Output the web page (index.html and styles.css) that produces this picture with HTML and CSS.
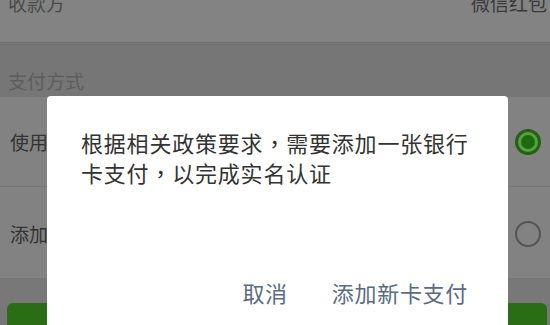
FILE: index.html
```html
<!DOCTYPE html>
<html lang="zh-CN">
<head>
<meta charset="utf-8">
<link rel="stylesheet" href="styles.css">
</head>
<body>
<div class="page">
  <div class="row-top">
    <span class="label">收款方</span>
    <span class="value">微信红包</span>
  </div>
  <div class="divider"></div>
  <div class="section-header">支付方式</div>
  <div class="option">
    <span class="label">使用零钱支付</span>
    <span class="radio checked"><span class="dot"></span></span>
  </div>
  <div class="option">
    <span class="label">添加新卡支付</span>
    <span class="radio"></span>
  </div>
  <div class="gap"></div>
  <div class="pay-btn"></div>

  <div class="dialog">
    <p class="message">根据相关政策要求<span class="comma" lang="zh-TW">，</span>需要添加一张银行卡支付<span class="comma" lang="zh-TW">，</span>以完成实名认证</p>
    <div class="actions">
      <span class="action">取消</span>
      <span class="action">添加新卡支付</span>
    </div>
  </div>
</div>
</body>
</html>
```

FILE: styles.css
```css
* { box-sizing: border-box; }
html, body {
  margin: 0;
  padding: 0;
  width: 550px;
  height: 325px;
  overflow: hidden;
  background: #777777;
  font-family: "Noto Sans CJK SC", "Noto Sans", sans-serif;
}
.page {
  position: relative;
  width: 550px;
  height: 325px;
  overflow: hidden;
}
.row-top {
  height: 42px;
  background: #838383;
  display: flex;
  justify-content: space-between;
  align-items: flex-start;
  padding: 0 3px 0 8px;
  font-size: 19px;
  color: #3a3a3a;
}
.row-top span {
  line-height: 20px;
  margin-top: -7px;
}
.row-top .label { color: #4a4a4a; }
.divider {
  height: 3px;
  border-top: 1px solid #6e6e6e;
  border-bottom: 1px solid #6e6e6e;
  background: #7a7a7a;
}
.section-header {
  height: 52px;
  background: #767676;
  padding: 24px 0 0 8px;
  font-size: 19px;
  line-height: 24px;
  color: #5d5d5d;
}
.option {
  height: 90px;
  background: #828282;
  display: flex;
  align-items: center;
  justify-content: space-between;
  padding: 0 9px 0 10px;
  font-size: 19px;
  color: #333;
  border-bottom: 1px solid #777;
}
.option + .option { height: 92px; padding-top: 2px; }
.radio {
  width: 26px;
  height: 26px;
  border-radius: 50%;
  border: 2px solid #545454;
  display: flex;
  align-items: center;
  justify-content: center;
}
.radio.checked {
  border: 3px solid #256016;
  background: #55a140;
}
.radio .dot {
  width: 14px;
  height: 14px;
  border-radius: 50%;
  background: #1d6a0c;
}
.gap {
  height: 24px;
  background: #787878;
}
.pay-btn {
  height: 40px;
  margin: 0 3px 0 7px;
  background: #2a6d14;
  border-radius: 6px;
}
.dialog {
  position: absolute;
  left: 47px;
  top: 96px;
  width: 461px;
  height: 260px;
  background: #ffffff;
  border-radius: 4px;
  padding: 31px 20px 0 34px;
}
.message {
  margin: 0;
  font-size: 22px;
  line-height: 30px;
  letter-spacing: 0.8px;
  color: #333333;
}
.comma {
  font-family: "Noto Sans CJK TC", sans-serif;
}
.actions {
  display: flex;
  justify-content: flex-end;
  gap: 44px;
  margin-top: 90px;
  padding-right: 20px;
}
.action {
  font-size: 22px;
  line-height: 30px;
  letter-spacing: 0.7px;
  color: #5b6b82;
}
```
